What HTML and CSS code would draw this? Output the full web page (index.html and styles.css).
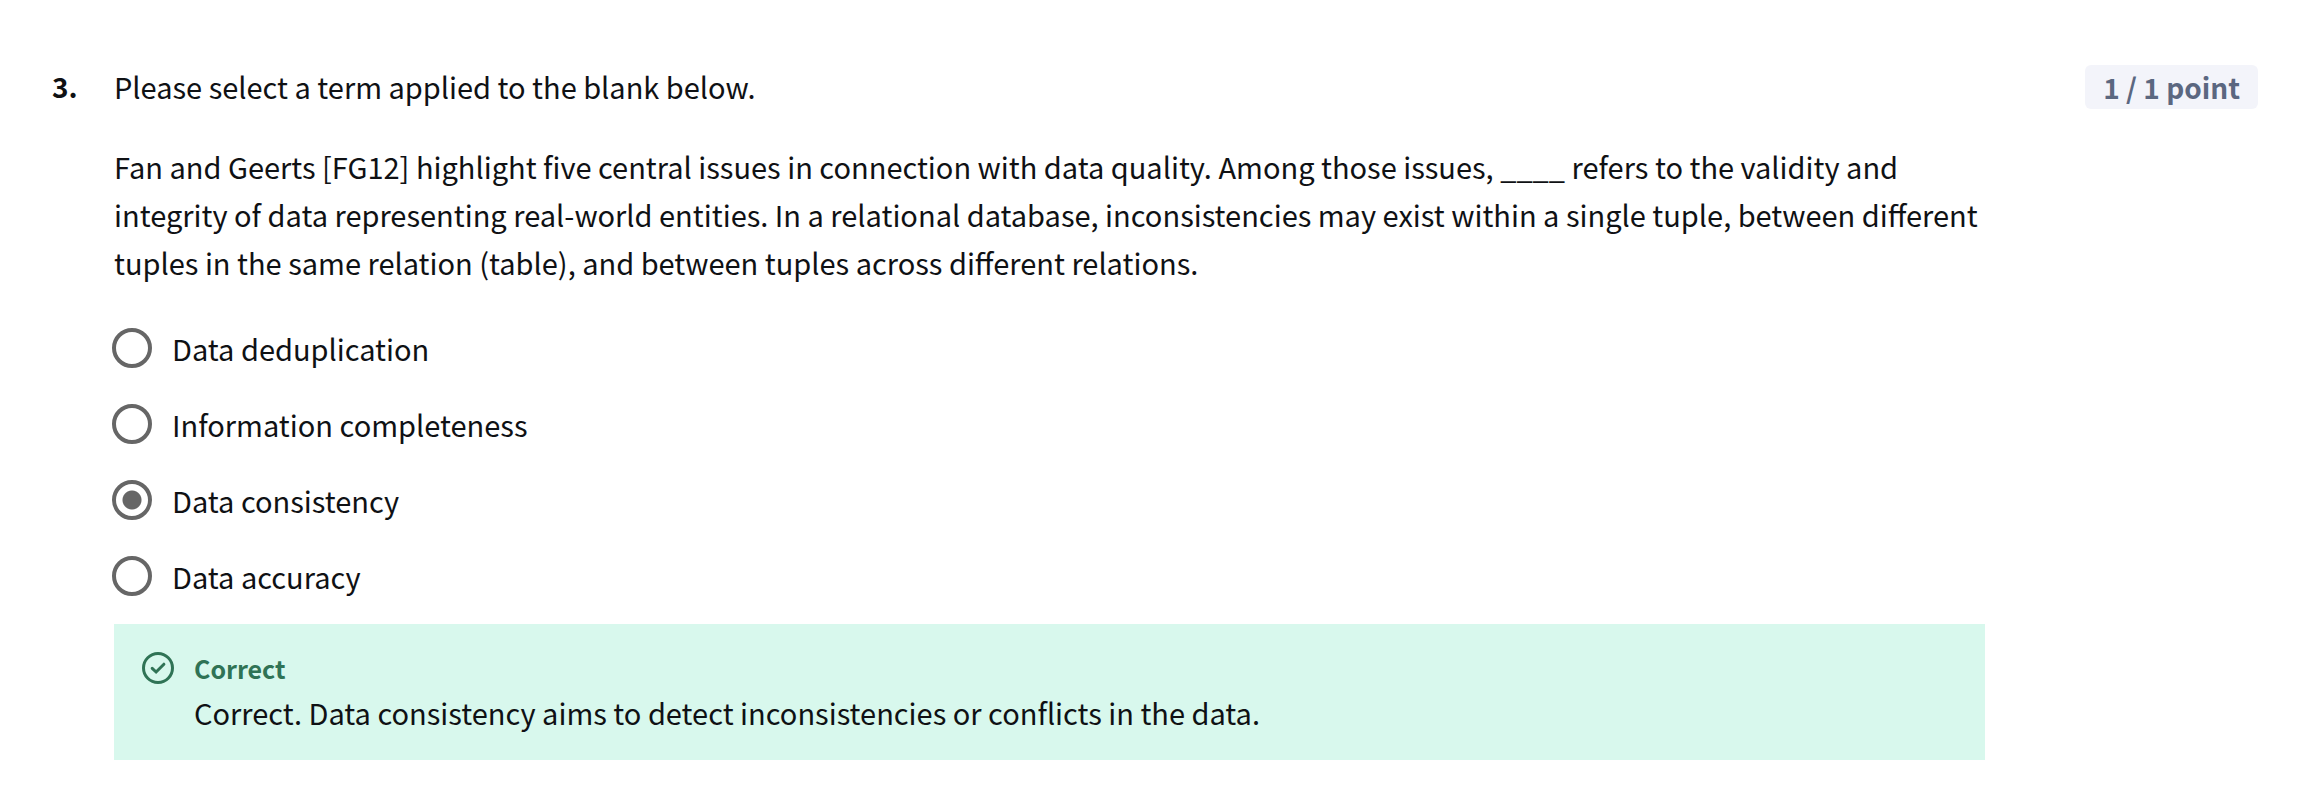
FILE: index.html
```html
<!DOCTYPE html>
<html lang="en">
<head>
<meta charset="utf-8">
<title>Quiz question 3</title>
<link rel="stylesheet" href="styles.css">
</head>
<body>
<main class="question">
  <div class="number">3.</div>
  <form class="content">
    <div class="prompt" id="prompt">
      <p>Please select a term applied to the blank below.</p>
      <p>Fan and Geerts [FG12] highlight five central issues in connection with data quality. Among those issues, ____ refers to the validity and integrity of data representing real-world entities. In a relational database, inconsistencies may exist within a single tuple, between different tuples in the same relation (table), and between tuples across different relations.</p>
    </div>
    <div class="options" role="radiogroup" aria-labelledby="prompt">
      <label class="option"><input class="radio" type="radio" name="term"><span>Data deduplication</span></label>
      <label class="option"><input class="radio" type="radio" name="term"><span>Information completeness</span></label>
      <label class="option"><input class="radio" type="radio" name="term" checked><span>Data consistency</span></label>
      <label class="option"><input class="radio" type="radio" name="term"><span>Data accuracy</span></label>
    </div>
    <section class="feedback">
      <svg class="check" viewBox="0 0 32 32" fill="none" stroke="currentColor" stroke-width="3" stroke-linecap="round" aria-hidden="true"><circle cx="16" cy="16" r="14.5"/><path d="M10.2 16.3l3.9 3.7 7.8-7.8"/></svg>
      <div>
        <h2 class="verdict">Correct</h2>
        <p>Correct. Data consistency aims to detect inconsistencies or conflicts in the data.</p>
      </div>
    </section>
  </form>
  <div class="points">1 / 1 point</div>
</main>
</body>
</html>
```

FILE: styles.css
```css
* { box-sizing: border-box; }
body {
  margin: 0;
  background: #fff;
  color: #0f1114;
  font: 29px/48px "Noto Sans CJK SC", "Noto Sans", sans-serif;
}
p, h2 { margin: 0; }
.question {
  display: flex;
  align-items: flex-start;
  padding: 62px 44px 38px 52px;
}
.number { flex: 0 0 62px; font-size: 28px; font-weight: 700; }
.content { flex: 1; margin-right: 100px; }
.prompt { display: grid; gap: 32px; }
.options { display: grid; gap: 28px; padding: 38px 0 24px; }
.option { display: flex; align-items: center; gap: 20px; }
.radio {
  appearance: none;
  flex: none;
  width: 40px;
  height: 40px;
  margin: 0 0 0 -2px;
  border: 4px solid #666;
  border-radius: 50%;
}
.radio:checked { background: radial-gradient(circle, #666 9px, transparent 10px); }
.feedback {
  display: flex;
  gap: 20px;
  padding: 24px 28px;
  background: #d8f8ed;
}
.check { flex: none; width: 32px; height: 32px; margin-top: 4px; color: #2f7355; }
.verdict { color: #2f7355; font-size: 25px; line-height: 40px; }
.points {
  margin-top: 3px;
  padding: 0 18px;
  border-radius: 6px;
  background: #f3f4fa;
  color: #5b6780;
  font-size: 28px;
  font-weight: 700;
  line-height: 44px;
}
```
